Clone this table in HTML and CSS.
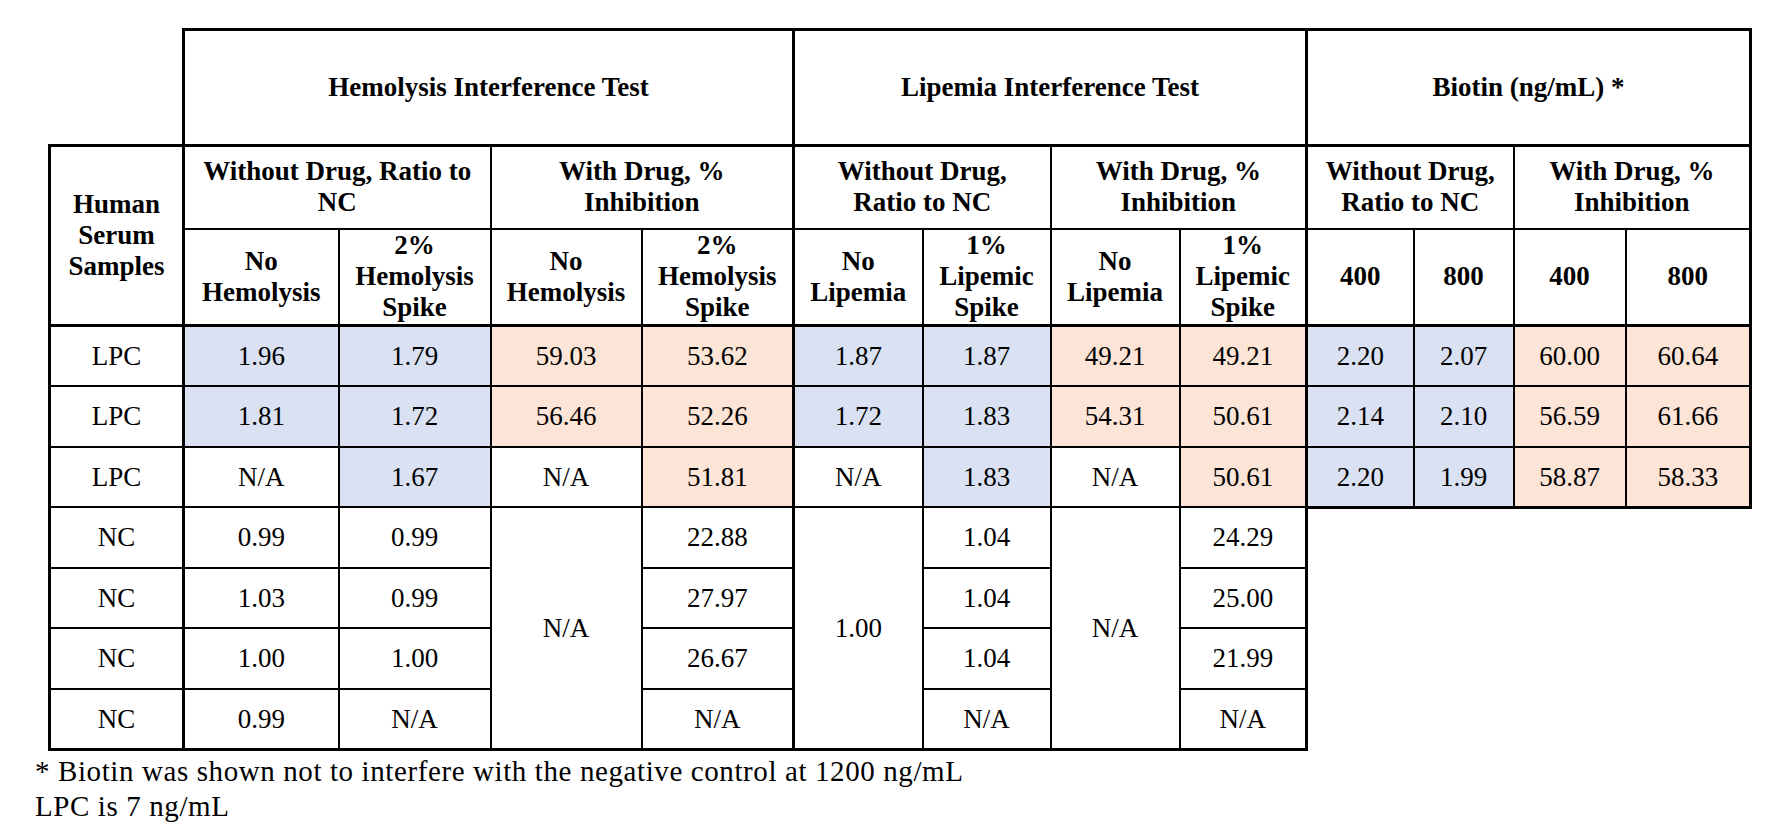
FILE: index.html
```html
<!DOCTYPE html>
<html lang="en">
<head>
<meta charset="utf-8">
<title>Interference Test Results</title>
<link rel="stylesheet" href="styles.css">
</head>
<body>
<div class="page">
  <table class="results">
    <colgroup>
      <col class="c-sample">
      <col class="c155"><col class="c152"><col class="c151"><col class="c152">
      <col class="c129"><col class="c128"><col class="c129"><col class="c127">
      <col class="c107"><col class="c100"><col class="c112"><col class="c125">
    </colgroup>
    <thead>
      <tr class="r-group">
        <th class="blank"></th>
        <th colspan="4" class="gl">Hemolysis Interference Test</th>
        <th colspan="4" class="gl">Lipemia Interference Test</th>
        <th colspan="4" class="gl gr">Biotin (ng/mL) *</th>
      </tr>
      <tr class="r-sub">
        <th rowspan="2" class="sample gt">Human<br>Serum<br>Samples</th>
        <th colspan="2" class="gl gt">Without Drug, Ratio to<br>NC</th>
        <th colspan="2" class="gt">With Drug, %<br>Inhibition</th>
        <th colspan="2" class="gl gt">Without Drug,<br>Ratio to NC</th>
        <th colspan="2" class="gt">With Drug, %<br>Inhibition</th>
        <th colspan="2" class="gl gt">Without Drug,<br>Ratio to NC</th>
        <th colspan="2" class="gr gt">With Drug, %<br>Inhibition</th>
      </tr>
      <tr class="r-cols">
        <th class="gl">No<br>Hemolysis</th>
        <th>2%<br>Hemolysis<br>Spike</th>
        <th>No<br>Hemolysis</th>
        <th>2%<br>Hemolysis<br>Spike</th>
        <th class="gl">No<br>Lipemia</th>
        <th>1%<br>Lipemic<br>Spike</th>
        <th>No<br>Lipemia</th>
        <th>1%<br>Lipemic<br>Spike</th>
        <th class="gl">400</th>
        <th>800</th>
        <th>400</th>
        <th class="gr">800</th>
      </tr>
    </thead>
    <tbody>
      <tr class="first">
        <td class="sample">LPC</td>
        <td class="blue gl">1.96</td><td class="blue">1.79</td><td class="peach">59.03</td><td class="peach">53.62</td>
        <td class="blue gl">1.87</td><td class="blue">1.87</td><td class="peach">49.21</td><td class="peach">49.21</td>
        <td class="blue gl">2.20</td><td class="blue">2.07</td><td class="peach">60.00</td><td class="peach gr">60.64</td>
      </tr>
      <tr>
        <td class="sample">LPC</td>
        <td class="blue gl">1.81</td><td class="blue">1.72</td><td class="peach">56.46</td><td class="peach">52.26</td>
        <td class="blue gl">1.72</td><td class="blue">1.83</td><td class="peach">54.31</td><td class="peach">50.61</td>
        <td class="blue gl">2.14</td><td class="blue">2.10</td><td class="peach">56.59</td><td class="peach gr">61.66</td>
      </tr>
      <tr>
        <td class="sample">LPC</td>
        <td class="gl">N/A</td><td class="blue">1.67</td><td>N/A</td><td class="peach">51.81</td>
        <td class="gl">N/A</td><td class="blue">1.83</td><td>N/A</td><td class="peach">50.61</td>
        <td class="blue gl gb">2.20</td><td class="blue gb">1.99</td><td class="peach gb">58.87</td><td class="peach gr gb">58.33</td>
      </tr>
      <tr>
        <td class="sample">NC</td>
        <td class="gl">0.99</td><td>0.99</td><td rowspan="4" class="gb">N/A</td><td>22.88</td>
        <td rowspan="4" class="gl gb">1.00</td><td>1.04</td><td rowspan="4" class="gb">N/A</td><td class="gr">24.29</td>
      </tr>
      <tr>
        <td class="sample">NC</td>
        <td class="gl">1.03</td><td>0.99</td><td>27.97</td>
        <td>1.04</td><td class="gr">25.00</td>
      </tr>
      <tr>
        <td class="sample">NC</td>
        <td class="gl">1.00</td><td>1.00</td><td>26.67</td>
        <td>1.04</td><td class="gr">21.99</td>
      </tr>
      <tr class="last">
        <td class="sample gb">NC</td>
        <td class="gl gb">0.99</td><td class="gb">N/A</td><td class="gb">N/A</td>
        <td class="gb">N/A</td><td class="gr gb">N/A</td>
      </tr>
    </tbody>
  </table>
  <div class="notes">
    <p>* Biotin was shown not to interfere with the negative control at 1200 ng/mL</p>
    <p>LPC is 7 ng/mL</p>
  </div>
</div>
</body>
</html>
```

FILE: styles.css
```css
html, body {
  margin: 0;
  padding: 0;
  background: #ffffff;
}

.page {
  padding: 28px 0 0 35px;
  font-family: "Liberation Serif", "Times New Roman", serif;
  color: #000000;
}

.results {
  margin-left: 13px;
  border-collapse: collapse;
  table-layout: fixed;
  width: 1701px;
}

.c-sample { width: 134px; }
.c155 { width: 155px; }
.c152 { width: 152px; }
.c151 { width: 151px; }
.c129 { width: 129px; }
.c128 { width: 128px; }
.c127 { width: 127px; }
.c107 { width: 107px; }
.c100 { width: 100px; }
.c112 { width: 112px; }
.c125 { width: 125px; }

.results th,
.results td {
  border: 2px solid #000000;
  padding: 0 4px;
  text-align: center;
  vertical-align: middle;
  font-size: 27px;
}

.results th {
  font-weight: bold;
  line-height: 31px;
}

.results td {
  font-weight: normal;
  line-height: 30px;
}

.results th.blank {
  border: none;
}

.r-group { height: 116px; }
.r-group th { border-top-width: 3px; }
.r-sub { height: 83px; }
.r-cols { height: 97px; }
.r-cols th, .results th.sample { border-bottom-width: 3px; }
.results tbody tr { height: 60.5px; }

.results .gl { border-left-width: 3px; }
.results .gr { border-right-width: 3px; }
.results .gt { border-top-width: 3px; }
.results .gb { border-bottom-width: 3px; }
.results .sample { border-left-width: 3px; }

.results .blue { background: #d9e1f2; }
.results .peach { background: #fce4d6; }

.notes {
  margin-top: 3px;
  font-size: 29px;
  letter-spacing: 0.6px;
  line-height: 35px;
}

.notes p {
  margin: 0;
}
```
